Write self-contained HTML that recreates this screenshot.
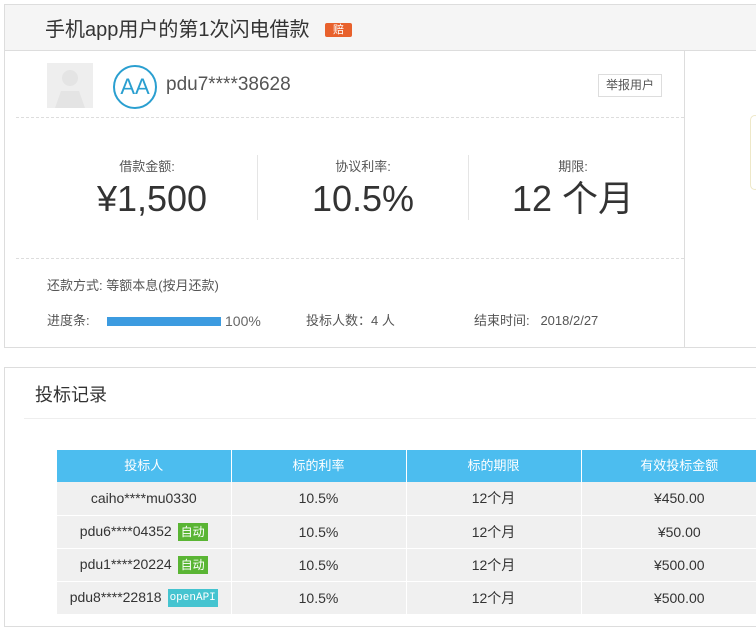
<!DOCTYPE html>
<html><head><meta charset="utf-8"><style>
*{margin:0;padding:0;box-sizing:border-box}
body{width:756px;height:616px;overflow:hidden;background:#fff;font-family:"Liberation Sans","Noto Sans CJK SC",sans-serif;color:#333;position:relative}
.abs{position:absolute}
.t{white-space:nowrap}
.big{font-size:36px;line-height:40px;top:179px;width:200px;text-align:center;color:#333}
td{line-height:18px;padding:0;vertical-align:middle}
.b{display:inline-block;color:#fff;font-size:12px;line-height:18px;padding:0 3px;margin-left:6px;vertical-align:middle}
</style></head><body>
<div class="abs" style="left:4px;top:4px;width:760px;height:344px;border:1px solid #ddd;"></div>
<div class="abs" style="left:5px;top:5px;width:760px;height:46px;background:#f5f5f5;border-bottom:1px solid #ddd"></div>
<div class="abs t" style="left:45px;top:16px;font-size:20px;line-height:28px;color:#333">手机app用户的第1次闪电借款</div>
<div class="abs t" style="left:325px;top:23px;width:27px;height:14px;background:#e8612c;color:#fff;font-size:11px;line-height:14px;text-align:center;border-radius:2px">赔</div>
<div class="abs" style="left:684px;top:51px;width:1px;height:297px;background:#ddd"></div>
<div class="abs" style="left:750px;top:115px;width:10px;height:75px;border:1px solid #eee8c8;border-radius:6px"></div>
<div class="abs" style="left:47px;top:63px;width:46px;height:45px;background:#eee"><svg width="46" height="45"><circle cx="23" cy="15" r="8" fill="#e4e4e4"/><path d="M8 45 L14 28 L32 28 L38 45Z" fill="#e4e4e4"/></svg></div>
<div class="abs" style="left:113px;top:65px;width:44px;height:44px;border:2px solid #2a9fd0;border-radius:50%;color:#2a9fd0;font-size:22px;line-height:40px;text-align:center">AA</div>
<div class="abs t" style="left:166px;top:73px;font-size:19px;line-height:24px;color:#555">pdu7****38628</div>
<div class="abs t" style="left:598px;top:74px;width:64px;height:23px;border:1px solid #ddd;font-size:12px;line-height:21px;text-align:center;color:#555">举报用户</div>
<div class="abs" style="left:16px;top:117px;width:668px;border-top:1px dashed #ddd"></div>
<div class="abs t" style="left:47px;top:158px;width:200px;text-align:center;font-size:13px;line-height:18px;color:#555">借款金额:</div>
<div class="abs t big" style="left:52px">¥1,500</div>
<div class="abs" style="left:257px;top:155px;width:1px;height:65px;background:#e5e5e5"></div>
<div class="abs t" style="left:263px;top:158px;width:200px;text-align:center;font-size:13px;line-height:18px;color:#555">协议利率:</div>
<div class="abs t big" style="left:263px">10.5%</div>
<div class="abs" style="left:468px;top:155px;width:1px;height:65px;background:#e5e5e5"></div>
<div class="abs t" style="left:473px;top:158px;width:200px;text-align:center;font-size:13px;line-height:18px;color:#555">期限:</div>
<div class="abs t big" style="left:473px">12 个月</div>
<div class="abs" style="left:16px;top:258px;width:668px;border-top:1px dashed #ddd"></div>
<div class="abs t" style="left:47px;top:277px;font-size:13px;line-height:18px;color:#555">还款方式: 等额本息(按月还款)</div>
<div class="abs t" style="left:47px;top:312px;font-size:13px;line-height:18px;color:#555">进度条:</div>
<div class="abs" style="left:107px;top:317px;width:114px;height:9px;background:#3c9be0"></div>
<div class="abs t" style="left:225px;top:312px;font-size:14px;line-height:18px;color:#666">100%</div>
<div class="abs t" style="left:306px;top:312px;font-size:13px;line-height:18px;color:#555">投标人数：4 人</div>
<div class="abs t" style="left:474px;top:312px;font-size:13px;line-height:18px;color:#555">结束时间:&nbsp;&nbsp; 2018/2/27</div>
<div class="abs" style="left:4px;top:367px;width:760px;height:260px;border:1px solid #ddd"></div>
<div class="abs t" style="left:35px;top:382px;font-size:18px;line-height:26px;color:#333">投标记录</div>
<div class="abs" style="left:24px;top:418px;width:740px;height:1px;background:#eee"></div>
<div class="abs" style="left:57px;top:450px;width:720px">
<table style="border-collapse:collapse;font-size:14px;color:#333;text-align:center">
<tr style="background:#4cbdef;color:#fff;height:32px;font-size:13px"><td style="width:174px;border-right:1px solid #fff">投标人</td><td style="width:175px;border-right:1px solid #fff">标的利率</td><td style="width:175px;border-right:1px solid #fff">标的期限</td><td style="width:196px">有效投标金额</td></tr>
<tr style="background:#f0f0f0;height:33px;border-bottom:1px solid #fff"><td style="border-right:1px solid #fff">caiho****mu0330</td><td style="border-right:1px solid #fff">10.5%</td><td style="border-right:1px solid #fff">12个月</td><td>¥450.00</td></tr>
<tr style="background:#f0f0f0;height:33px;border-bottom:1px solid #fff"><td style="border-right:1px solid #fff">pdu6****04352<span class="b" style="background:#5ab534">自动</span></td><td style="border-right:1px solid #fff">10.5%</td><td style="border-right:1px solid #fff">12个月</td><td>¥50.00</td></tr>
<tr style="background:#f0f0f0;height:33px;border-bottom:1px solid #fff"><td style="border-right:1px solid #fff">pdu1****20224<span class="b" style="background:#5ab534">自动</span></td><td style="border-right:1px solid #fff">10.5%</td><td style="border-right:1px solid #fff">12个月</td><td>¥500.00</td></tr>
<tr style="background:#f0f0f0;height:33px"><td style="border-right:1px solid #fff">pdu8****22818<span class="b" style="background:#45c4d0;font-size:11px;padding:0 2px;font-family:'Liberation Mono',monospace">openAPI</span></td><td style="border-right:1px solid #fff">10.5%</td><td style="border-right:1px solid #fff">12个月</td><td>¥500.00</td></tr>
</table></div>
</body></html>
